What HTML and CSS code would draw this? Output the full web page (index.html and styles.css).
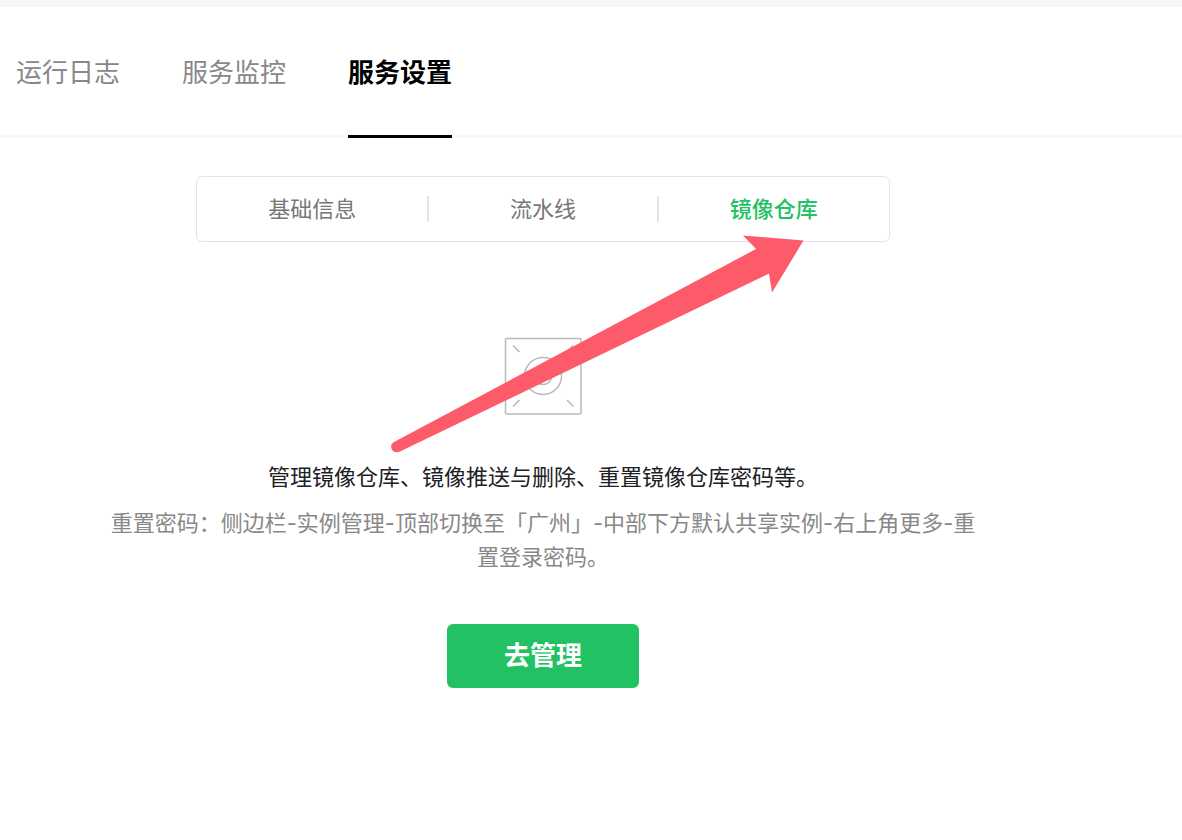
FILE: index.html
```html
<!DOCTYPE html>
<html lang="zh-CN">
<head>
  <meta charset="UTF-8">
  <meta name="viewport" content="width=device-width, initial-scale=1.0">
  <title>服务设置</title>
  <link rel="stylesheet" href="styles.css">
</head>
<body>
  <nav class="tabs">
    <a class="tab" href="#logs">运行日志</a>
    <a class="tab" href="#monitor">服务监控</a>
    <a class="tab active" href="#settings">服务设置</a>
  </nav>

  <main class="content">
    <div class="segment">
      <button type="button" class="segment-item">基础信息</button>
      <button type="button" class="segment-item">流水线</button>
      <button type="button" class="segment-item active">镜像仓库</button>
    </div>

    <section class="registry">
      <svg class="registry-icon" width="78" height="78" viewBox="0 0 78 78" aria-hidden="true">
        <rect x="1.500" y="1.500" width="75.500" height="75.500" rx="1"/>
        <circle cx="39" cy="39" r="18.500"/>
        <circle cx="39" cy="39" r="8.500"/>
        <path d="M9 8.500l6.500 6.500M69 8.500l-6.500 6.500M9 69.500l6.500-6.500M69.500 69.500l-6.500-6.500"/>
      </svg>
      <p class="registry-title">管理镜像仓库、镜像推送与删除、重置镜像仓库密码等。</p>
      <p class="registry-hint">重置密码：侧边栏-实例管理-顶部切换至「广州」-中部下方默认共享实例-右上角更多-重置登录密码。</p>
      <button type="button" class="btn-primary">去管理</button>
    </section>

    <!-- arrow pointing at the registry item -->
    <svg class="arrow" width="414" height="218" viewBox="0 0 414 218" aria-hidden="true">
      <path d="M353 0.500L413.500 5.500L382 57.500L379 38.500L11 216C7 218.500 3 217.500 1.500 213.500C0.500 210.500 1.500 208.500 4 207L366 14Z"/>
    </svg>
  </main>
</body>
</html>
```
FILE: styles.css
```css
* {
  box-sizing: border-box;
}
body {
  margin: 0;
  border-top: 7px solid #f5f6f8;
  background-color: #fff;
  font-family: Inter, "Noto Sans CJK SC", sans-serif;
  font-size: 22px;
  line-height: 34px;
  color: #202124;
}
button {
  border: none;
  background: none;
  padding: 0;
  font: inherit;
  cursor: pointer;
}
.tabs {
  display: flex;
  gap: 62px;
  height: 131px;
  padding: 0 16px;
  border-bottom: 3px solid #f7f7f7;
}
.tab {
  height: 131px;
  border-bottom: 3px solid transparent;
  font-size: 26px;
  line-height: 132px;
  color: #888;
  text-decoration: none;
  white-space: nowrap;
}
.tab.active {
  border-bottom-color: #000;
  color: #000;
  font-weight: 700;
}
.content {
  position: relative;
  display: flex;
  flex-direction: column;
  align-items: center;
  max-width: 1086px;
  padding: 38px 24px 64px;
}
.segment {
  display: flex;
  align-items: center;
  width: 100%;
  max-width: 694px;
  padding: 15px 0;
  border: 1px solid #e4e4e4;
  border-radius: 6px;
}
.segment-item {
  position: relative;
  flex: 1;
  color: #777;
}
.segment-item + .segment-item::before {
  content: "";
  position: absolute;
  left: -1px;
  top: 4px;
  width: 2px;
  height: 26px;
  background-color: #e4e4e4;
}
.segment-item.active {
  color: #22c164;
  font-weight: 500;
}
.registry {
  display: flex;
  flex-direction: column;
  align-items: center;
  width: 100%;
  max-width: 880px;
  padding-top: 95px;
  text-align: center;
}
.registry-icon {
  fill: none;
  stroke: #b9b9b9;
  stroke-width: 1.5;
}
.registry-title {
  margin: 45px 0 12px;
}
.registry-hint {
  margin: 0 0 50px;
  color: #888;
}
.btn-primary {
  width: 192px;
  height: 64px;
  border-radius: 6px;
  background-color: #22c164;
  color: #fff;
  font-size: 26px;
  font-weight: 700;
}
.btn-primary:hover {
  background-color: #1dae59;
}
.arrow {
  position: absolute;
  top: 97px;
  left: calc(50% - 153px);
  fill: #fd5b69;
  pointer-events: none;
}
```
